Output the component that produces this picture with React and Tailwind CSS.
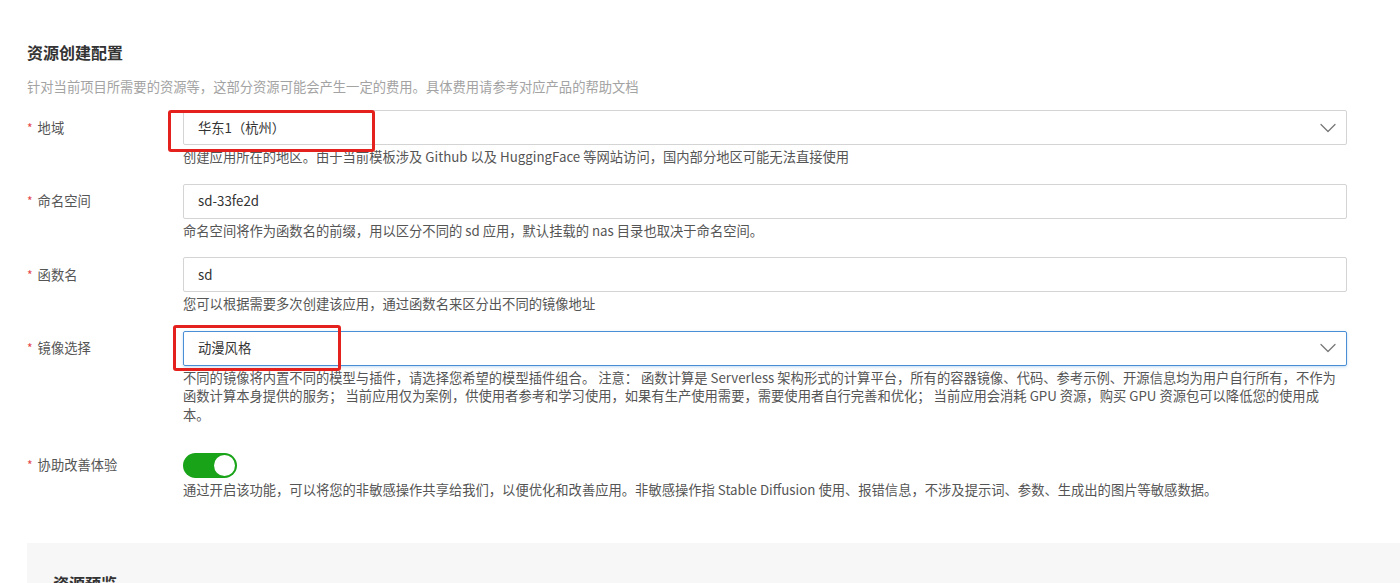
import { ChevronDown } from "lucide-react";

const font = { fontFamily: '"Noto Sans CJK SC", "Liberation Sans", sans-serif' };

const Label = ({ children }) => (
  <div className="w-[156px] shrink-0 h-[35px] flex items-center text-[13.3px] text-[#555]">
    <span className="text-[#e5484d] mr-[5px] text-[12px]">*</span>
    {children}
  </div>
);

const Help = ({ children, className = "mt-[3px]" }) => (
  <p className={`${className} text-[13.3px] leading-[18.5px] text-[#555]`}>{children}</p>
);

export default function App() {
  return (
    <div className="bg-white min-h-[583px] overflow-hidden" style={font}>
      <div className="pl-[27px] pt-[40px]">
        <h2 className="text-[16px] leading-[24px] font-bold text-[#333]">资源创建配置</h2>
        <p className="mt-[13px] text-[13.3px] leading-[20px] text-[#a3a3a3]">
          针对当前项目所需要的资源等，这部分资源可能会产生一定的费用。具体费用请参考对应产品的帮助文档
        </p>

        <div className="mt-[13px] pr-[53px]">
          {/* 地域 */}
          <div className="flex">
            <Label>地域</Label>
            <div className="flex-1 relative">
              <div className="h-[35px] border border-[#d4d4d4] rounded-[2px] flex items-center justify-between pl-[14px] pr-[4px] text-[13.3px] text-[#333]">
                <span>华东1（杭州）</span>
                <ChevronDown size={28} strokeWidth={1.1} className="text-[#777]" />
              </div>
              <div className="absolute left-[-15px] top-0 w-[207px] h-[42px] border-[3px] border-[#e5211d] rounded-[3px]" />
              <Help>创建应用所在的地区。由于当前模板涉及 Github 以及 HuggingFace 等网站访问，国内部分地区可能无法直接使用</Help>
            </div>
          </div>

          {/* 命名空间 */}
          <div className="flex mt-[17px]">
            <Label>命名空间</Label>
            <div className="flex-1">
              <div className="h-[35px] border border-[#d4d4d4] rounded-[2px] flex items-center pl-[14px] text-[13.3px] text-[#333]">
                sd-33fe2d
              </div>
              <Help>命名空间将作为函数名的前缀，用以区分不同的 sd 应用，默认挂载的 nas 目录也取决于命名空间。</Help>
            </div>
          </div>

          {/* 函数名 */}
          <div className="flex mt-[17px]">
            <Label>函数名</Label>
            <div className="flex-1">
              <div className="h-[35px] border border-[#d4d4d4] rounded-[2px] flex items-center pl-[14px] text-[13.3px] text-[#333]">
                sd
              </div>
              <Help>您可以根据需要多次创建该应用，通过函数名来区分出不同的镜像地址</Help>
            </div>
          </div>

          {/* 镜像选择 */}
          <div className="flex mt-[17px]">
            <Label>镜像选择</Label>
            <div className="flex-1 relative">
              <div className="h-[35px] border border-[#4a8fd6] rounded-[2px] shadow-[0_1px_3px_rgba(74,143,214,0.35)] flex items-center justify-between pl-[14px] pr-[4px] text-[13.3px] text-[#333]">
                <span>动漫风格</span>
                <ChevronDown size={28} strokeWidth={1.1} className="text-[#777]" />
              </div>
              <div className="absolute left-[-10px] top-[-6px] w-[168px] h-[46px] border-[3px] border-[#e5211d] rounded-[3px]" />
              <Help>
                不同的镜像将内置不同的模型与插件，请选择您希望的模型插件组合。 注意： 函数计算是 Serverless 架构形式的计算平台，所有的容器镜像、代码、参考示例、开源信息均为用户自行所有，不作为函数计算本身提供的服务； 当前应用仅为案例，供使用者参考和学习使用，如果有生产使用需要，需要使用者自行完善和优化； 当前应用会消耗 GPU 资源，购买 GPU 资源包可以降低您的使用成
                <br />
                本。
              </Help>
            </div>
          </div>

          {/* 协助改善体验 */}
          <div className="flex mt-[23px]">
            <Label>协助改善体验</Label>
            <div className="flex-1">
              <div className="h-[34px] pt-[6px]">
                <div className="w-[54px] h-[25px] rounded-full bg-[#19a319] relative">
                  <div className="absolute right-[2px] top-[2px] w-[21px] h-[21px] rounded-full bg-white" />
                </div>
              </div>
              <Help className="mt-0">通过开启该功能，可以将您的非敏感操作共享给我们，以便优化和改善应用。非敏感操作指 Stable Diffusion 使用、报错信息，不涉及提示词、参数、生成出的图片等敏感数据。</Help>
            </div>
          </div>
        </div>

        <div className="mt-[43px] bg-[#f7f7f7] pl-[26px] pt-[28px] h-[80px]">
          <h3 className="text-[16px] leading-[24px] font-bold text-[#333]">资源预览</h3>
        </div>
      </div>
    </div>
  );
}
